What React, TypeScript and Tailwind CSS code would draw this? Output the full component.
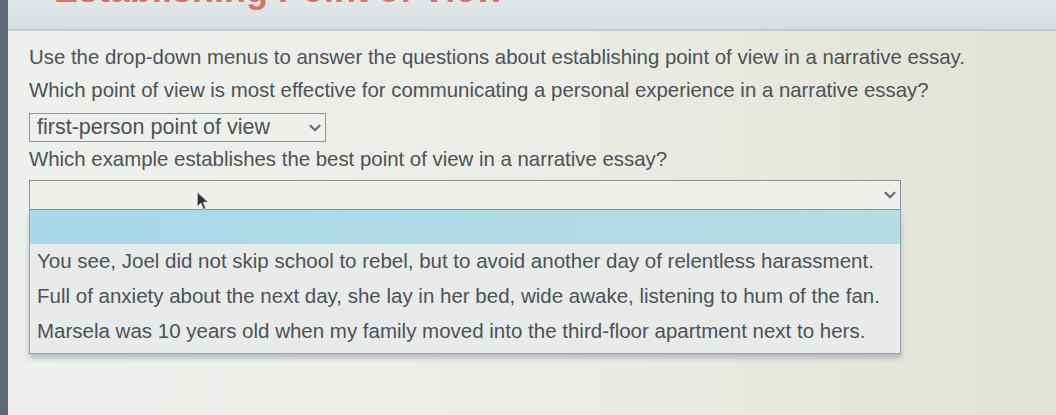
import { ChevronDown } from 'lucide-react';

const options = [
  'You see, Joel did not skip school to rebel, but to avoid another day of relentless harassment.',
  'Full of anxiety about the next day, she lay in her bed, wide awake, listening to hum of the fan.',
  'Marsela was 10 years old when my family moved into the third-floor apartment next to hers.',
];

function Cursor() {
  return (
    <svg width="14" height="20" viewBox="0 0 13 19" className="absolute left-[167px] top-[11px]">
      <path d="M1 1 L1 15 L4.5 11.5 L7 17.5 L9.2 16.6 L6.8 10.8 L11.5 10.8 Z" fill="#2f3338" stroke="#e8ebe8" strokeWidth="0.8" />
    </svg>
  );
}

export default function App() {
  return (
    <div className="w-[1056px] h-[415px] flex overflow-hidden font-['Liberation_Sans',Arial,sans-serif] text-[#4d5158]">
      {/* window edge */}
      <div className="w-[8px] bg-[#5f6772] shrink-0" />

      <div className="flex-1 flex flex-col bg-gradient-to-r from-[#eef0ed] via-[#ecede8] to-[#e2e2d6]">
        {/* lesson header, title scrolled mostly out of view */}
        <div className="h-[31px] bg-gradient-to-b from-[#e3e8ea] to-[#d6dde1] border-b-2 border-[#c3cacd] overflow-hidden relative shrink-0">
          <div className="absolute left-[46px] top-[-28px] text-[36px] leading-none font-bold text-[#d87166] whitespace-nowrap">
            Establishing Point of View
          </div>
        </div>

        <div className="pl-[21px] pt-[8px] flex flex-col items-start">
          <p className="text-[20.4px] leading-[36px]">
            Use the drop-down menus to answer the questions about establishing point of view in a narrative essay.
          </p>
          <p className="text-[20.4px] leading-[30px]">
            Which point of view is most effective for communicating a personal experience in a narrative essay?
          </p>

          <div className="mt-[8px] w-[297px] h-[29px] border border-[#8e9499] bg-[#eef0ec] flex items-center justify-between pl-[7px] pr-[1px]">
            <span className="text-[21.5px]">first-person point of view</span>
            <ChevronDown size={18} strokeWidth={3} className="text-[#6a6f75]" />
          </div>

          <p className="text-[20.4px] leading-[34px]">
            Which example establishes the best point of view in a narrative essay?
          </p>

          <div className="relative mt-[4px] w-[872px]">
            <div className="h-[30px] border border-[#8e9499] bg-[#eef0ec] flex items-center justify-end pr-[1px]">
              <ChevronDown size={18} strokeWidth={3} className="text-[#6a6f75]" />
            </div>
            <Cursor />

            {/* open option list */}
            <div className="border border-t-0 border-[#9aa1a6] bg-[#e8ebea] shadow-[0_4px_5px_rgba(80,90,130,0.35)]">
              <div className="h-[34px] bg-gradient-to-r from-[#a9d8e7] to-[#b3dce3]" />
              {options.map((o) => (
                <div key={o} className="h-[35px] flex items-center pl-[7px] text-[20.5px] whitespace-nowrap">
                  {o}
                </div>
              ))}
              <div className="h-[4px]" />
            </div>
          </div>
        </div>
      </div>
    </div>
  );
}
